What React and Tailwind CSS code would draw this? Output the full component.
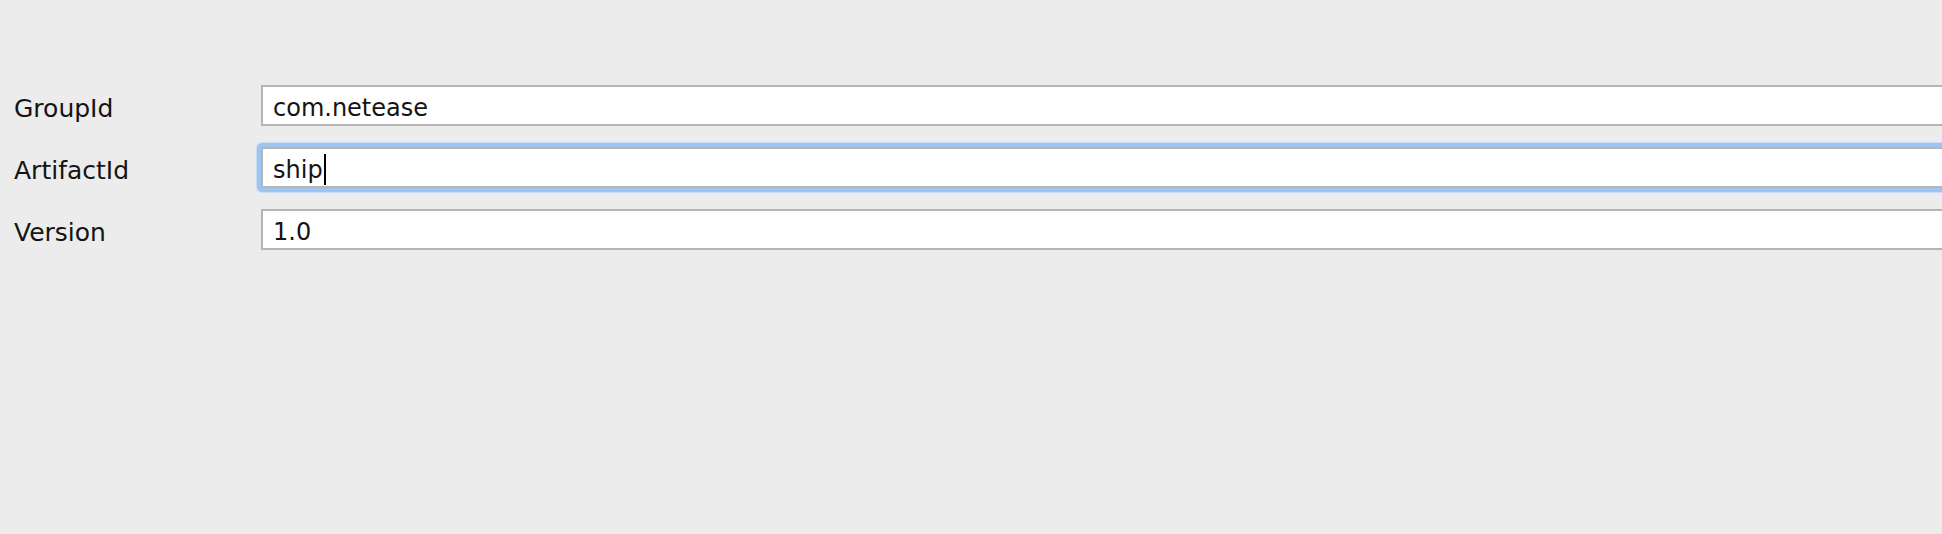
import React from "react";

const fields = [
    { label: "GroupId", value: "com.netease" },
    { label: "ArtifactId", value: "ship", focused: true },
    { label: "Version", value: "1.0" },
];

const App = () => {
    return (
        <div
            className="w-[1942px] h-[534px] overflow-hidden bg-[#ececec] pt-[85px] pl-[14px] text-[24px] text-[#141414]"
            style={{ fontFamily: '"DejaVu Sans", "Noto Sans", sans-serif' }}
        >
            <div className="flex flex-col gap-[21px]">
                {fields.map((f) => (
                    <div key={f.label} className="flex">
                        <div className="w-[247px] h-[41px] pt-[7px] leading-[33px] text-[25px] shrink-0">{f.label}</div>
                        <div
                            className={
                                f.focused
                                    ? "w-[1700px] shrink-0 h-[41px] box-border border-2 border-[#b5b5b5] bg-white pt-[5px] pl-[10px] leading-[33px] rounded-[2px] shadow-[0_0_0_4px_#9ec4f0,0_0_0_5px_#c8ddf6]"
                                    : "w-[1700px] shrink-0 h-[41px] box-border border-2 border-[#b5b5b5] bg-white pt-[5px] pl-[10px] leading-[33px]"
                            }
                        >
                            <span className="relative">
                                {f.value}
                                {f.focused && (
                                    <span className="absolute right-[-3px] top-[-2px] w-[2px] h-[31px] bg-black"></span>
                                )}
                            </span>
                        </div>
                    </div>
                ))}
            </div>
        </div>
    );
};

export default App;
